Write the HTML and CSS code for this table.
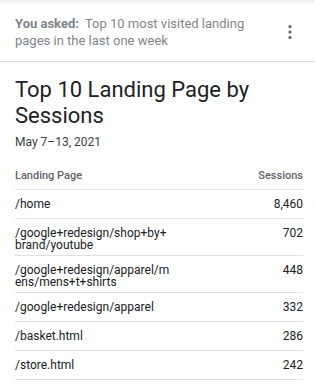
FILE: index.html
```html
<!DOCTYPE html>
<html lang="en">
<head>
<meta charset="utf-8">
<title>Top 10 Landing Page by Sessions</title>
<link rel="stylesheet" href="styles.css">
</head>
<body>
<div class="strip"></div>
<header class="question">
  <p class="question-text"><span class="asked">You asked:</span> <span class="query">Top 10 most visited landing pages in the last one week</span></p>
  <button class="more" aria-label="More options">
    <svg width="6" height="16" viewBox="0 0 6 16"><circle cx="3" cy="2.5" r="1.6"/><circle cx="3" cy="8" r="1.6"/><circle cx="3" cy="13.5" r="1.6"/></svg>
  </button>
</header>
<main class="result">
  <h1 class="title">Top 10 Landing Page by Sessions</h1>
  <p class="date">May 7–13, 2021</p>
  <div class="table">
    <div class="th">Landing Page</div><div class="th num">Sessions</div>
    <div class="td page">/home</div><div class="td num">8,460</div>
    <div class="td page">/google+redesign/shop+by+brand/youtube</div><div class="td num">702</div>
    <div class="td page">/google+redesign/apparel/mens/mens+t+shirts</div><div class="td num">448</div>
    <div class="td page">/google+redesign/apparel</div><div class="td num">332</div>
    <div class="td page">/basket.html</div><div class="td num">286</div>
    <div class="td page">/store.html</div><div class="td num">242</div>
  </div>
</main>
</body>
</html>
```
FILE: styles.css
```css
html, body {
  margin: 0;
  padding: 0;
  background: #ffffff;
  font-family: Roboto, "Liberation Sans", sans-serif;
  color: #202124;
}
.strip {
  height: 3px;
  background: #f1f3f4;
}
.question {
  display: flex;
  align-items: center;
  padding: 12px 0 12px 15px;
  border-bottom: 1px solid #dadce0;
}
.question-text {
  margin: 0;
  flex: 1;
  font-size: 13px;
  line-height: 17px;
  color: #80868b;
  padding-right: 30px;
}
.asked {
  font-weight: 700;
  color: #80868b;
  margin-right: 3px;
}
.query {
  color: #80868b;
}
.more {
  border: 0;
  background: none;
  padding: 0;
  width: 20px;
  margin-right: 15px;
  display: flex;
  justify-content: center;
  fill: #5f6368;
}
.result {
  padding: 15px 12px 0 15px;
}
.title {
  margin: 0;
  font-size: 22px;
  line-height: 26px;
  font-weight: 400;
  color: #202124;
}
.date {
  margin: 5px 0 0;
  font-size: 12px;
  line-height: 16px;
  color: #3c4043;
}
.table {
  display: grid;
  grid-template-columns: 155px 1fr;
  margin-top: 20px;
}
.th {
  font-size: 11px;
  font-weight: 500;
  line-height: 12px;
  color: #5f6368;
  padding-bottom: 7px;
  border-bottom: 1px solid #e0e0e0;
}
.td {
  font-size: 12px;
  line-height: 12px;
  min-height: 16px;
  padding: 8px 0 4px;
  border-bottom: 1px solid #e0e0e0;
  color: #202124;
}
.page {
  word-break: break-all;
}
.num {
  text-align: right;
}
```
